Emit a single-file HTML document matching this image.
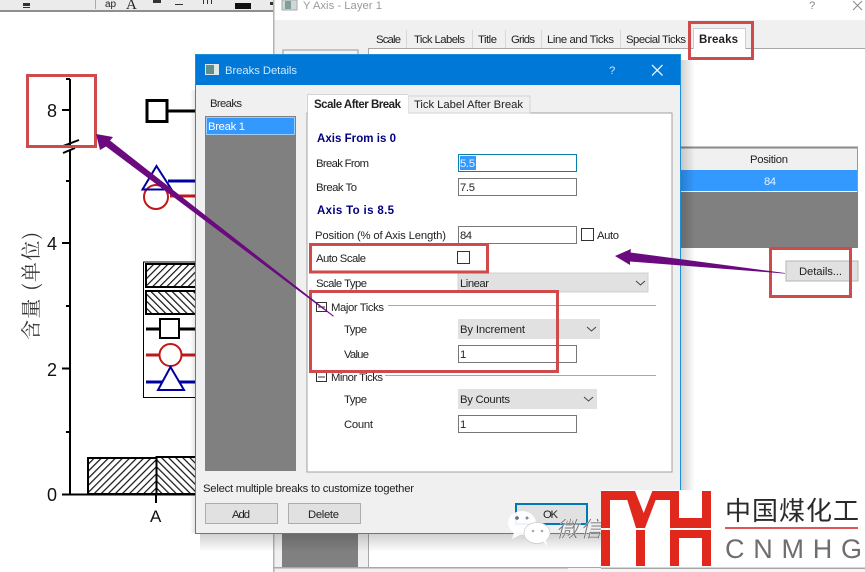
<!DOCTYPE html>
<html><head><meta charset="utf-8"><title>Breaks Details</title>
<style>
html,body{margin:0;padding:0;background:#fff;width:865px;height:572px;overflow:hidden}
svg{display:block}
text{font-family:"Liberation Sans","Noto Sans CJK SC",sans-serif;font-size:11.3px;fill:#222}
.b{font-weight:bold;font-size:11.5px}
.n{font-weight:bold;fill:#00007f;font-size:11.5px}
</style></head><body>
<svg width="865" height="572" viewBox="0 0 865 572" xmlns="http://www.w3.org/2000/svg">
<defs>
<pattern id="h1" width="5" height="5" patternUnits="userSpaceOnUse" patternTransform="rotate(45)"><rect width="5" height="5" fill="#fff"/><rect width="1.2" height="5" fill="#111"/></pattern>
<pattern id="h2" width="5" height="5" patternUnits="userSpaceOnUse" patternTransform="rotate(-45)"><rect width="5" height="5" fill="#fff"/><rect width="1.2" height="5" fill="#111"/></pattern>
<linearGradient id="sr" x1="0" x2="1" y1="0" y2="0"><stop offset="0" stop-color="#000" stop-opacity=".18"/><stop offset="1" stop-color="#000" stop-opacity="0"/></linearGradient>
<linearGradient id="sb" x1="0" x2="0" y1="0" y2="1"><stop offset="0" stop-color="#000" stop-opacity=".18"/><stop offset="1" stop-color="#000" stop-opacity="0"/></linearGradient>
<linearGradient id="sl" x1="1" x2="0" y1="0" y2="0"><stop offset="0" stop-color="#000" stop-opacity=".1"/><stop offset="1" stop-color="#000" stop-opacity="0"/></linearGradient>
</defs>

<!-- top toolbar -->
<rect x="0" y="0" width="273" height="10" fill="#ebebeb"/>
<rect x="0" y="10" width="273" height="2" fill="#8f8f8f"/>
<g fill="#333">
<rect x="23" y="3" width="7" height="3"/><rect x="23" y="7" width="7" height="1"/>
<rect x="95" y="0" width="1" height="9" fill="#aaa"/>
<rect x="153" y="0" width="8" height="3"/><rect x="175" y="4" width="8" height="1"/>
<rect x="203" y="0" width="1" height="4"/><rect x="207" y="0" width="1" height="4"/><rect x="211" y="0" width="1" height="4"/>
<rect x="235" y="3" width="16" height="6" fill="#111"/><rect x="270" y="2" width="3" height="3"/>
</g>
<text x="105" y="7" style="font-size:10px" fill="#555">ap</text>
<text x="126" y="9" style="font-size:15px;font-family:'Liberation Serif',serif" fill="#222">A</text>

<!-- back dialog -->
<rect x="273" y="0" width="592" height="20" fill="#fff"/>
<rect x="273" y="20" width="592" height="552" fill="#f0f0f0"/>
<rect x="273" y="0" width="1.5" height="572" fill="#b4b4b4"/>
<rect x="282" y="0" width="15" height="10" fill="#cfd8d8" stroke="#aaa"/>
<rect x="285" y="1" width="6" height="8" fill="#7f9f9a"/>
<text x="303" y="9" style="fill:#9a9a9a" textLength="79">Y Axis - Layer 1</text>
<text x="809" y="9" style="fill:#888" >?</text>
<path d="M853 1l9 9M862 1l-9 9" stroke="#888" fill="none"/>
<rect x="368" y="48" width="497" height="519" fill="#fff"/>
<rect x="368" y="48" width="497" height="1" fill="#a8a8a8"/>
<rect x="368" y="48" width="1" height="520" fill="#a8a8a8"/>
<rect x="273" y="567" width="592" height="1.5" fill="#a8a8a8"/>
<rect x="568" y="568" width="297" height="4" fill="#f4f4f4"/>
<rect x="283" y="50" width="75" height="8" fill="#f4f4f4" stroke="#999"/>
<rect x="282" y="533" width="76" height="34" fill="#808080"/>
<g>
<rect x="368" y="29" width="325" height="19" fill="#f0f0f0"/>
<path d="M406.500 30v18M472.500 30v18M505.500 30v18M541.500 30v18M620.500 30v18" stroke="#d8d8d8"/>
<text x="376" y="43" textLength="25">Scale</text>
<text x="414" y="43" textLength="51">Tick Labels</text>
<text x="478" y="43" textLength="19">Title</text>
<text x="511" y="43" textLength="24">Grids</text>
<text x="547" y="43" textLength="67">Line and Ticks</text>
<text x="626" y="43" textLength="60">Special Ticks</text>
<rect x="693" y="28" width="52" height="21" fill="#fff"/>
<path d="M693.500 49V28.500H745.500V49" stroke="#ccc" fill="none"/>
<text x="699" y="43" class="b" textLength="39">Breaks</text>
</g>

<!-- back table -->
<rect x="681" y="147" width="177" height="23" fill="#f0f0f0"/>
<rect x="681" y="146.500" width="177" height="2" fill="#8a8a8a"/>
<rect x="857" y="147" width="1" height="101" fill="#999"/>
<text x="750" y="163" textLength="38">Position</text>
<rect x="681" y="170" width="176" height="21" fill="#3399ff"/>
<text x="764" y="185" style="fill:#e8f2ff" textLength="12">84</text>
<rect x="681" y="192" width="177" height="56" fill="#808080"/>
<rect x="786" y="261" width="72" height="20" fill="#e1e1e1" stroke="#b5b5b5"/>
<text x="799" y="275" textLength="43">Details...</text>

<!-- plot -->
<g stroke="#000" stroke-width="2" fill="none">
<path d="M70 79V146M70 150V494"/>
<path d="M66 79H70M62 110H70M66 181H70M62 243H70M66 306H70M62 368.500H70M66 432H70M62 494.500H195M156 494V503"/>
<path d="M63 146L79 140M63 153L75 148"/>
</g>
<g>
<text x="47" y="117" style="font-size:18px;fill:#111">8</text>
<text x="47" y="250" style="font-size:18px;fill:#111">4</text>
<text x="47" y="376" style="font-size:18px;fill:#111">2</text>
<text x="47" y="501" style="font-size:18px;fill:#111">0</text>
<text x="150" y="522" style="font-size:17px;fill:#111">A</text>
</g>
<text transform="translate(38,340) rotate(-90)" style="font-family:'Noto Serif CJK SC','Liberation Serif',serif;font-size:20px;fill:#333" textLength="108">含量 (单位)</text>

<rect x="147" y="100.500" width="20" height="21" fill="#fff" stroke="#000" stroke-width="3"/>
<path d="M167 111H196" stroke="#000" stroke-width="3"/>
<path d="M168 181H196" stroke="#0000a0" stroke-width="3"/>
<path d="M170 196H196" stroke="#c01818" stroke-width="3"/>
<circle cx="156" cy="197" r="12" fill="#fff" stroke="#c01818" stroke-width="2"/>
<path d="M156.500 166L142.500 189.500H171.500Z" fill="none" stroke="#0000a0" stroke-width="2"/>

<rect x="143.500" y="262" width="60" height="135.500" fill="#fff" stroke="#000"/>
<rect x="146" y="264" width="60" height="23" fill="url(#h1)" stroke="#000" stroke-width="2"/>
<rect x="146" y="291" width="60" height="23" fill="url(#h2)" stroke="#000" stroke-width="2"/>
<path d="M146 329H196" stroke="#000" stroke-width="3"/>
<rect x="160" y="319" width="19" height="19" fill="#fff" stroke="#000" stroke-width="2"/>
<path d="M146 355H196" stroke="#c01818" stroke-width="3"/>
<circle cx="170.500" cy="355" r="11" fill="#fff" stroke="#c01818" stroke-width="2"/>
<path d="M146 382H196" stroke="#0000a0" stroke-width="3"/>
<path d="M170.500 367L158 390H184Z" fill="#fff" stroke="#0000a0" stroke-width="2"/>
<rect x="88" y="458" width="68.500" height="36" fill="url(#h1)" stroke="#000" stroke-width="2"/>
<rect x="156.500" y="457" width="60" height="37" fill="url(#h2)" stroke="#000" stroke-width="2"/>

<!-- dialog shadows -->
<rect x="681" y="60" width="14" height="480" fill="url(#sr)"/>
<rect x="190" y="90" width="5" height="443" fill="url(#sl)"/>
<rect x="200" y="534" width="481" height="18" fill="url(#sb)"/>

<!-- main dialog -->
<rect x="195.500" y="54.500" width="485" height="479" fill="#f0f0f0" stroke="#1b8fd8"/>
<rect x="196" y="55" width="484" height="30" fill="#0078d7"/>
<rect x="205" y="64" width="14" height="11" fill="#dfe8e8"/>
<rect x="206" y="65" width="8" height="9" fill="#5f8f8c"/>
<text x="225" y="74" style="fill:#cfe8fa" textLength="72">Breaks Details</text>
<text x="609" y="74" style="fill:#cfe8fa">?</text>
<path d="M652 65L662.500 75.500M662.500 65L652 75.500" stroke="#e4f1fb" stroke-width="1.300" fill="none"/>

<text x="210" y="107" textLength="32">Breaks</text>
<rect x="205" y="116" width="91" height="355" fill="#808080"/>
<rect x="206" y="117" width="89" height="18" fill="#3399ff"/>
<rect x="206.500" y="117.500" width="88" height="17" fill="none" stroke="#fff" stroke-dasharray="1 1"/>
<text x="208" y="130" style="fill:#fff" textLength="37">Break 1</text>

<!-- tabs + panel -->
<rect x="307" y="113" width="365" height="359" fill="#fff" stroke="#a0a0a0"/>
<rect x="408" y="96" width="122" height="17" fill="#f0f0f0" stroke="#d4d4d4"/>
<text x="414" y="108" textLength="109">Tick Label After Break</text>
<rect x="308" y="94" width="100" height="20" fill="#fff"/>
<path d="M307.500 113V94.500H408" stroke="#d4d4d4" fill="none"/>
<text x="314" y="108" class="b" textLength="87">Scale After Break</text>

<text x="317" y="142" class="n" textLength="79">Axis From is 0</text>
<text x="316" y="167" textLength="53">Break From</text>
<rect x="458.500" y="154.500" width="118" height="17" fill="#fff" stroke="#0a7fa8"/>
<rect x="460" y="156" width="16" height="14" fill="#3399ff"/>
<text x="460" y="167" style="fill:#e8f2ff" textLength="15">5.5</text>
<text x="316" y="191" textLength="41">Break To</text>
<rect x="458.500" y="178.500" width="118" height="17" fill="#fff" stroke="#777"/>
<text x="460" y="191" textLength="15">7.5</text>
<text x="317" y="214" class="n" textLength="77">Axis To is 8.5</text>
<text x="315" y="239" textLength="131">Position (% of Axis Length)</text>
<rect x="458.500" y="226.500" width="118" height="17" fill="#fff" stroke="#777"/>
<text x="460" y="239" textLength="12">84</text>
<rect x="581.500" y="228.500" width="12" height="12" fill="#fff" stroke="#333"/>
<text x="597" y="239" textLength="22">Auto</text>
<text x="316" y="262" textLength="50">Auto Scale</text>
<rect x="457.500" y="251.500" width="12" height="12" fill="#fff" stroke="#333"/>
<text x="316" y="287" textLength="51">Scale Type</text>
<rect x="458" y="273" width="190" height="19" fill="#e1e1e1" stroke="#d0d0d0"/>
<text x="460" y="287" textLength="29">Linear</text>
<path d="M636 281l4.500 4 4.500-4" stroke="#444" fill="none"/>

<rect x="316.500" y="302.500" width="10" height="9" fill="#fff" stroke="#333"/>
<path d="M318 307H325" stroke="#333"/>
<text x="331" y="311" textLength="53">Major Ticks</text>
<path d="M388 305.500H656" stroke="#a8a8a8"/>
<text x="344" y="333" textLength="23">Type</text>
<rect x="458" y="319" width="142" height="20" fill="#e1e1e1"/>
<text x="460" y="333" textLength="65">By Increment</text>
<path d="M587 327l4.500 4 4.500-4" stroke="#444" fill="none"/>
<text x="344" y="358" textLength="25">Value</text>
<rect x="458.500" y="345.500" width="118" height="17" fill="#fff" stroke="#777"/>
<text x="460" y="358">1</text>

<rect x="316.500" y="372.500" width="10" height="9" fill="#fff" stroke="#333"/>
<path d="M318 377H325" stroke="#333"/>
<text x="331" y="381" textLength="52">Minor Ticks</text>
<path d="M385 375.500H656" stroke="#a8a8a8"/>
<text x="344" y="403" textLength="23">Type</text>
<rect x="458" y="389" width="139" height="20" fill="#e1e1e1"/>
<text x="460" y="403" textLength="50">By Counts</text>
<path d="M584 397l4.500 4 4.500-4" stroke="#444" fill="none"/>
<text x="344" y="428" textLength="29">Count</text>
<rect x="458.500" y="415.500" width="118" height="17" fill="#fff" stroke="#777"/>
<text x="460" y="428">1</text>

<text x="203" y="492" textLength="211">Select multiple breaks to customize together</text>
<rect x="205.500" y="503.500" width="72" height="20" fill="#e1e1e1" stroke="#adadad"/>
<text x="232" y="518" textLength="18">Add</text>
<rect x="288.500" y="503.500" width="72" height="20" fill="#e1e1e1" stroke="#adadad"/>
<text x="308" y="518" textLength="31">Delete</text>
<rect x="516" y="504" width="71" height="20" fill="#e1e1e1" stroke="#0078b8" stroke-width="2"/>
<text x="543" y="518" textLength="15">OK</text>

<!-- red highlight boxes -->
<g fill="none" stroke="#cf4a4a" stroke-width="3">
<rect x="27.500" y="75.500" width="68" height="71"/>
<rect x="689.500" y="22.500" width="63" height="36"/>
<rect x="770.500" y="248.500" width="80" height="48"/>
<rect x="310.500" y="244.500" width="177" height="27.500"/>
<rect x="310.500" y="291.500" width="247" height="80"/>
</g>

<!-- purple arrows -->
<path d="M96 134L113 137L110 140.500L334 316L333 316.500L106 146.500L100 150Z" fill="#6a0a7e"/>
<path d="M615 256L631 249L630.500 252.500L785 273L785 273.600L630 261.500L630 265Z" fill="#6a0a7e"/>

<!-- WeChat watermark -->
<ellipse cx="522" cy="523" rx="14" ry="12" fill="#fff" opacity=".92"/>
<path d="M514 532l-2 7 8-4z" fill="#fff" opacity=".92"/>
<ellipse cx="537" cy="533" rx="13" ry="10.500" fill="#fff" stroke="#ccc" stroke-width=".7"/>
<path d="M543 541l4 5-1-7z" fill="#fff"/>
<circle cx="517" cy="518" r="1.800" fill="#667"/><circle cx="527" cy="518" r="1.500" fill="#889"/>
<circle cx="533" cy="531" r="1.300" fill="#aaa"/><circle cx="542" cy="531" r="1.300" fill="#aaa"/>
<text x="556" y="537" style="font-size:22px;fill:#777;stroke:#fff;stroke-width:.3;font-style:italic" textLength="46">微信</text>

<!-- logo -->
<rect x="601" y="490" width="264" height="78" fill="#fff"/>
<rect x="601" y="567.500" width="264" height="1.500" fill="#a8a8a8"/>
<g fill="#e0281c">
<path d="M601 491H635L643.700 513L652.300 491H679V500H655.700L645 528H636L627.300 500H610V528H601Z"/>
<rect x="670" y="491" width="9" height="47"/>
<rect x="702" y="491" width="9" height="47"/>
<rect x="670" y="518" width="41" height="20"/>
<rect x="601" y="530" width="9" height="36"/>
<rect x="636" y="530" width="9" height="36"/>
<rect x="670" y="530" width="9" height="36"/>
<rect x="702" y="530" width="9" height="36"/>
</g>
<rect x="601" y="528" width="110" height="2" fill="#fff"/>
<text x="725" y="520" style="font-size:26px;fill:#2a2a2a" textLength="134">中国煤化工</text>
<rect x="725" y="527" width="133" height="2" fill="#dd5555"/>
<text x="725" y="558" style="font-size:27px;fill:#6e6e6e" textLength="137">CNMHG</text>
</svg>
</body></html>
